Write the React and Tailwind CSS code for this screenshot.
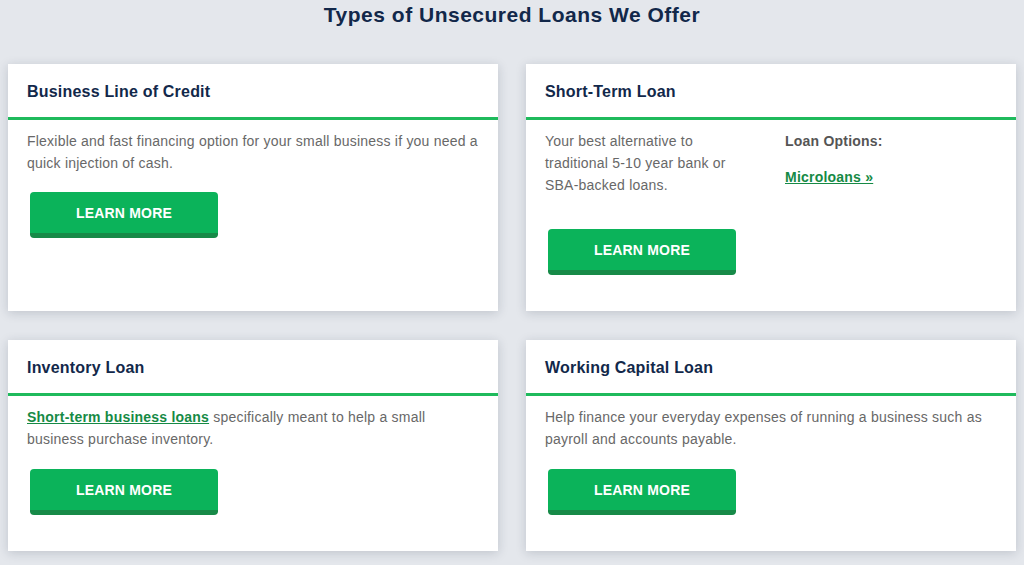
import React from "react";

const font = { fontFamily: '"Liberation Sans", Arial, sans-serif' };

const LearnMore = ({ className = "" }) => (
  <button
    type="button"
    className={
      "ml-[3px] w-[188px] h-[46px] rounded-[4px] bg-[#0bb35a] border-b-[5px] border-[#178a48] text-white font-bold text-[14px] uppercase tracking-[0.2px] " +
      className
    }
  >
    Learn More
  </button>
);

const Card = ({ title, children }) => (
  <div className="bg-white shadow-[0_2px_10px_rgba(30,40,60,0.18)] flex flex-col">
    <div className="h-[56px] pt-[17px] px-[19px] border-b-[3px] border-[#1fba5c]">
      <h3 className="text-[16px] leading-[22px] font-bold text-[#12284a] tracking-[0.2px]">
        {title}
      </h3>
    </div>
    <div className="px-[19px] pt-[10px] pb-[36px] text-[14px] leading-[22px] text-[#686868] tracking-[0.22px]">
      {children}
    </div>
  </div>
);

const App = () => {
  return (
    <div className="min-h-screen bg-[#e4e7ec] px-2 pt-[3px] pb-4" style={font}>
      <h2 className="text-center text-[21px] leading-[24px] font-bold text-[#12284a] tracking-[0.5px]">
        Types of Unsecured Loans We Offer
      </h2>

      <div className="mt-[37px] grid grid-cols-2 gap-x-[28px] gap-y-[29px]">
        <Card title="Business Line of Credit">
          <p>
            Flexible and fast financing option for your small business if you need a quick
            injection of cash.
          </p>
          <LearnMore className="mt-[18px]" />
        </Card>

        <Card title="Short-Term Loan">
          <div className="grid grid-cols-[212px_1fr] gap-x-[28px]">
            <p>Your best alternative to traditional 5-10 year bank or SBA-backed loans.</p>
            <div>
              <p className="font-bold text-[#555555]">Loan Options:</p>
              <a href="#" className="block mt-[14px] font-bold text-[#168a45] underline">
                Microloans »
              </a>
            </div>
          </div>
          <LearnMore className="mt-[33px]" />
        </Card>

        <Card title="Inventory Loan">
          <p>
            <a href="#" className="font-bold text-[#168a45] underline">
              Short-term business loans
            </a>{" "}
            specifically meant to help a small business purchase inventory.
          </p>
          <LearnMore className="mt-[19px]" />
        </Card>

        <Card title="Working Capital Loan">
          <p>
            Help finance your everyday expenses of running a business such as payroll and
            accounts payable.
          </p>
          <LearnMore className="mt-[19px]" />
        </Card>
      </div>
    </div>
  );
};

export default App;
